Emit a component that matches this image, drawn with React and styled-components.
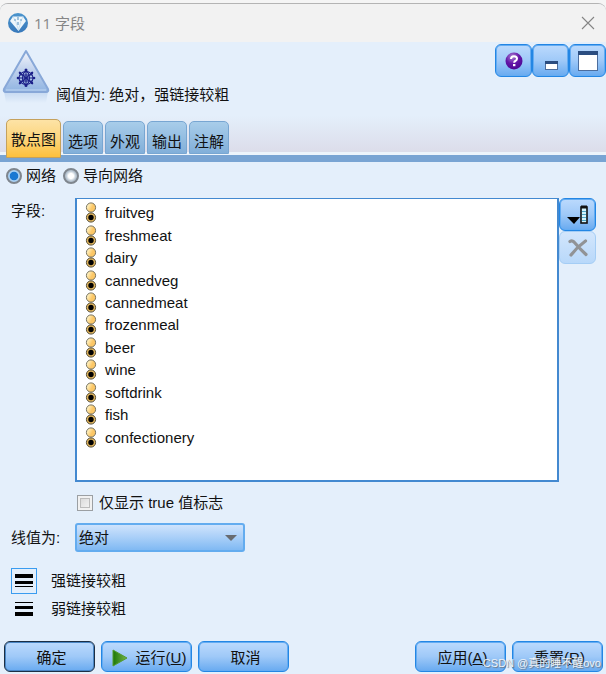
import React, { useState } from 'react'
import styled, { createGlobalStyle } from 'styled-components'

const fields = [
  'fruitveg',
  'freshmeat',
  'dairy',
  'cannedveg',
  'cannedmeat',
  'frozenmeal',
  'beer',
  'wine',
  'softdrink',
  'fish',
  'confectionery'
]

const tabs = ['散点图', '选项', '外观', '输出', '注解']

const LogoIcon = () => (
  <svg width="20" height="20" viewBox="0 0 20 20" aria-hidden="true">
    <defs>
      <linearGradient id="logo" x1="0" y1="0" x2="0" y2="1">
        <stop offset="0" stopColor="#4b95cd" />
        <stop offset="1" stopColor="#3878ba" />
      </linearGradient>
    </defs>
    <circle cx="10" cy="10" r="10" fill="url(#logo)" />
    <path d="M5 3.5L15 3.5L18 8L10.5 18L2 8Z" fill="#eef6fb" />
    <path d="M5 3.5L7.5 8L10.5 17L13 8L15 3.5" fill="none" stroke="#c3dced" strokeWidth="0.8" />
    <path d="M10 4v3M10 9v3M6 7h2M12 7h2" stroke="#6a9fca" strokeWidth="1.2" />
  </svg>
)

const WebGraphIcon = () => (
  <svg width="48" height="56" viewBox="0 0 48 56" aria-hidden="true">
    <defs>
      <linearGradient id="tri" x1="0" y1="0" x2="0" y2="1">
        <stop offset="0" stopColor="#f3f5fb" />
        <stop offset="0.5" stopColor="#bccfec" />
        <stop offset="1" stopColor="#8fb4e2" />
      </linearGradient>
      <linearGradient id="shine" x1="0" y1="0" x2="0" y2="1">
        <stop offset="0" stopColor="#c3d7f0" />
        <stop offset="1" stopColor="#e4effb" />
      </linearGradient>
    </defs>
    <path d="M2 44h44l-2 12h-40z" fill="url(#shine)" />
    <path d="M24 4L46 42Q47 45 44 45H4Q1 45 2 42Z" fill="url(#tri)" stroke="#88a8d8" strokeWidth="2" strokeLinejoin="round" />
    <path d="M4 43h40" stroke="#c0d6f2" strokeWidth="1" />
    <g fill="none" stroke="#1b2089" strokeWidth="1.1">
      <ellipse cx="24" cy="31" rx="7" ry="6.5" />
      <ellipse cx="24" cy="31" rx="3.5" ry="6.5" />
      <path d="M24 22v17M15 31h18M17 25l14 12M31 25l-14 12M18 28h12M18 34h12" />
    </g>
    <g fill="#1b2089">
      <circle cx="24" cy="23" r="1.5" />
      <circle cx="24" cy="38.5" r="1.5" />
      <circle cx="16" cy="31" r="1.3" />
      <circle cx="32" cy="31" r="1.3" />
      <circle cx="18" cy="26" r="1.2" />
      <circle cx="30" cy="26" r="1.2" />
      <circle cx="18" cy="36" r="1.2" />
      <circle cx="30" cy="36" r="1.2" />
    </g>
  </svg>
)

const CloseIcon = () => (
  <svg width="14" height="14" viewBox="0 0 14 14" aria-hidden="true">
    <path d="M1 1L13 13M13 1L1 13" stroke="#858585" strokeWidth="1.1" />
  </svg>
)

const HelpIcon = () => (
  <svg width="18" height="18" viewBox="0 0 18 18" aria-hidden="true">
    <defs>
      <radialGradient id="help" cx="0.4" cy="0.25" r="0.8">
        <stop offset="0" stopColor="#a981d3" />
        <stop offset="0.5" stopColor="#6416a8" />
        <stop offset="1" stopColor="#4a0592" />
      </radialGradient>
    </defs>
    <circle cx="9" cy="9" r="8.5" fill="url(#help)" />
    <path d="M6 7Q6 4.200 9 4.200Q12 4.200 12 6.800Q12 8.200 10.300 9Q9.200 9.600 9.200 10.700" fill="none" stroke="#fff" strokeWidth="2" />
    <rect x="8" y="12" width="2.4" height="2.2" fill="#fff" />
  </svg>
)

const MinimizeIcon = () => (
  <svg width="22" height="22" viewBox="0 0 22 22" aria-hidden="true">
    <rect x="5.5" y="11.5" width="12" height="8" fill="#fff" stroke="#4c6d9d" />
    <path d="M5 11h13v3h-13z" fill="#2b4d80" />
  </svg>
)

const MaximizeIcon = () => (
  <svg width="22" height="22" viewBox="0 0 22 22" aria-hidden="true">
    <rect x="1.5" y="1.5" width="19" height="19" fill="#fff" stroke="#4c6d9d" />
    <path d="M1 1h20v4h-20z" fill="#2b4d80" />
  </svg>
)

const FlagIcon = () => (
  <svg width="12" height="22" viewBox="0 0 12 22" aria-hidden="true">
    <defs>
      <linearGradient id="flag" x1="0" y1="0" x2="1" y2="0.5">
        <stop offset="0.2" stopColor="#fff3c4" />
        <stop offset="0.7" stopColor="#fcc766" />
      </linearGradient>
    </defs>
    <circle cx="6" cy="5.5" r="4.6" fill="url(#flag)" stroke="#77725f" />
    <circle cx="6" cy="15.5" r="4.6" fill="#e3b65b" stroke="#57503b" />
    <circle cx="6" cy="15.5" r="2.7" fill="#000" />
  </svg>
)

const PickFieldIcon = () => (
  <svg width="22" height="20" viewBox="0 0 22 20" aria-hidden="true">
    <path d="M0 12h13l-6 7z" fill="#000" />
    <rect x="14" y="2" width="6" height="16" fill="#d3f4fc" stroke="#111" strokeWidth="1.6" />
    <path d="M14 2h6" stroke="#111" strokeWidth="3" />
    <path d="M15 6.5h4M15 9.5h4M15 12.5h4M15 15.5h4" stroke="#4fa6c8" />
  </svg>
)

const RemoveIcon = () => (
  <svg width="20" height="18" viewBox="0 0 20 18" aria-hidden="true">
    <path d="M2 2.500Q4 1 6 3Q12 10 18 15.500M17.500 2Q9 8 3 16" fill="none" stroke="#919396" strokeWidth="3.2" strokeLinecap="round" />
  </svg>
)

const LinesIcon = ({ flip }) => (
  <svg width="18" height="14" viewBox="0 0 18 14" aria-hidden="true">
    {flip
      ? <path d="M0 0h18v1H0zM0 4h18v3H0zM0 10h18v4H0z" fill="#000" />
      : <path d="M0 0h18v4H0zM0 7h18v3H0zM0 12h18v1H0z" fill="#000" />}
  </svg>
)

const RunIcon = () => (
  <svg width="18" height="20" viewBox="0 0 18 20" aria-hidden="true">
    <defs>
      <linearGradient id="run" x1="0" y1="0" x2="1" y2="0">
        <stop offset="0" stopColor="#1c7806" />
        <stop offset="1" stopColor="#76b34a" />
      </linearGradient>
    </defs>
    <path d="M2 2L16 10L2 18Z" fill="url(#run)" stroke="#529b30" strokeLinejoin="round" />
  </svg>
)

const CaretIcon = () => (
  <svg width="12" height="8" viewBox="0 0 12 8" aria-hidden="true">
    <path d="M0 1h12l-6 6z" fill="#686b70" />
  </svg>
)

export default function App() {
  const [activeTab, setActiveTab] = useState(tabs[0])
  const [graph, setGraph] = useState('web')
  const [onlyTrue, setOnlyTrue] = useState(false)
  const [lineValue, setLineValue] = useState('absolute')
  const [weight, setWeight] = useState('strong')

  return (
    <Page>
      <GlobalStyle />
      <Dialog>
        <TitleBar>
          <LogoIcon />
          <Title>11 字段</Title>
          <CloseButton type="button" aria-label="关闭"><CloseIcon /></CloseButton>
        </TitleBar>

        <Header>
          <WebGraphIcon />
          <Summary>阈值为: 绝对，强链接较粗</Summary>
          <Toolbar>
            <ToolButton type="button" aria-label="帮助"><HelpIcon /></ToolButton>
            <ToolButton type="button" aria-label="最小化"><MinimizeIcon /></ToolButton>
            <ToolButton type="button" aria-label="最大化"><MaximizeIcon /></ToolButton>
          </Toolbar>
        </Header>

        <TabStrip role="tablist">
          {tabs.map((tab) => (
            <Tab
              key={tab}
              type="button"
              role="tab"
              aria-selected={tab === activeTab}
              $active={tab === activeTab}
              onClick={() => setActiveTab(tab)}>
              {tab}
            </Tab>
          ))}
        </TabStrip>

        <Panel>
          <RadioRow>
            <RadioLabel>
              <Radio name="graph" checked={graph === 'web'} onChange={() => setGraph('web')} />
              网络
            </RadioLabel>
            <RadioLabel>
              <Radio name="graph" checked={graph === 'directed'} onChange={() => setGraph('directed')} />
              导向网络
            </RadioLabel>
          </RadioRow>

          <Form>
            <FieldLabel id="fields-label">字段:</FieldLabel>
            <FieldArea>
              <FieldList aria-labelledby="fields-label">
                {fields.map((field) => (
                  <FieldItem key={field}>
                    <FlagIcon />
                    {field}
                  </FieldItem>
                ))}
              </FieldList>
              <SideButtons>
                <ToolButton type="button" aria-label="选择字段"><PickFieldIcon /></ToolButton>
                <ToolButton type="button" aria-label="删除字段" disabled><RemoveIcon /></ToolButton>
              </SideButtons>
            </FieldArea>

            <CheckLabel>
              <Checkbox checked={onlyTrue} onChange={(e) => setOnlyTrue(e.target.checked)} />
              仅显示 true 值标志
            </CheckLabel>

            <SelectLabel htmlFor="line-value">线值为:</SelectLabel>
            <SelectWrap>
              <Select id="line-value" value={lineValue} onChange={(e) => setLineValue(e.target.value)}>
                <option value="absolute">绝对</option>
                <option value="overall">总体百分比</option>
              </Select>
              <CaretIcon />
            </SelectWrap>
          </Form>

          <WeightGroup>
            <WeightLabel>
              <HiddenRadio name="weight" checked={weight === 'strong'} onChange={() => setWeight('strong')} />
              <WeightBox><LinesIcon /></WeightBox>
              强链接较粗
            </WeightLabel>
            <WeightLabel>
              <HiddenRadio name="weight" checked={weight === 'weak'} onChange={() => setWeight('weak')} />
              <WeightBox><LinesIcon flip /></WeightBox>
              弱链接较粗
            </WeightLabel>
          </WeightGroup>
        </Panel>

        <Footer>
          <FooterButton type="button" $primary>确定</FooterButton>
          <FooterButton type="button"><RunIcon /><span>运行(<u>U</u>)</span></FooterButton>
          <FooterButton type="button">取消</FooterButton>
          <Spacer />
          <FooterButton type="button"><span>应用(<u>A</u>)</span></FooterButton>
          <FooterButton type="button"><span>重置(<u>R</u>)</span></FooterButton>
          <Watermark>CSDN @真的睡不醒ovo</Watermark>
        </Footer>
      </Dialog>
    </Page>
  )
}

const GlobalStyle = createGlobalStyle`
* {
  box-sizing: border-box;
}

body {
  margin: 0;
  background: #e4effb;
  color: #111;
  font-family: "Liberation Sans", "Noto Sans CJK SC", sans-serif;
  font-size: 15px;
  line-height: 22px;
}

button, select, input {
  font: inherit;
  color: inherit;
  margin: 0;
}

svg {
  display: block;
  flex: none;
}
`

const Page = styled.div`
padding-top: 3px;
background: #f5f5f5;
`

const Dialog = styled.main`
display: flex;
flex-direction: column;
min-height: calc(100vh - 3px);
background: #e4effb;
border-top: 1px solid #b4b4b4;
border-radius: 8px 8px 0 0;
overflow: hidden;
`

const TitleBar = styled.header`
display: flex;
align-items: center;
gap: 6px;
height: 38px;
padding: 0 11px 0 8px;
background: #f2f2f2;
`

const Title = styled.h1`
flex: 1;
margin: 0;
color: #868686;
font-family: "Open Sans", "Noto Sans CJK SC", sans-serif;
font-size: 15px;
font-weight: 400;
`

const CloseButton = styled.button`
padding: 0;
border: 0;
background: none;
`

const Header = styled.section`
display: flex;
padding: 2px 0 0 2px;
height: 73px;

> svg {
  margin-top: 3px;
}
`

const Summary = styled.p`
flex: 1;
align-self: flex-end;
margin: 0;
padding: 0 0 9px 6px;
`

const Toolbar = styled.div`
display: flex;
`

const ToolButton = styled.button`
display: grid;
place-items: center;
width: 37px;
height: 33px;
padding: 0;
border: 1px solid #2386e4;
border-radius: 6px;
background: linear-gradient(#bcdafd, #9fc9f8 50%, #68aaf0);
box-shadow: inset 0 0 0 1px #64acf2;

&:disabled {
  border-color: #a4cdf5;
  background: linear-gradient(#d3e6fc, #b8d8fa);
  box-shadow: none;
}
`

const TabStrip = styled.div`
display: flex;
align-items: flex-start;
gap: 2px;
height: 47px;
padding: 0 6px;
background: linear-gradient(#e4effb, #dcddea 37px, #edf4fb 37px, #edf4fb 40px, #79a4d3 40px);
`

const Tab = styled.button`
height: ${(props) => (props.$active ? '39px' : '33px')};
margin-top: ${(props) => (props.$active ? '4px' : '6px')};
padding: ${(props) => (props.$active ? '2px 4px 0' : '8px 4px 0')};
border: 1px solid ${(props) => (props.$active ? '#c5a15c' : '#78a6d2')};
border-radius: 5px 5px 0 0;
background: ${(props) => (props.$active ? 'linear-gradient(#fde3a6, #fcd57d 50%, #fdc03c)' : 'linear-gradient(#a8cdea, #82afd9)')};
`

const Panel = styled.section`
flex: 1;
padding: 0 9px 0 11px;
`

const RadioRow = styled.div`
display: flex;
gap: 7px;
margin-left: -5px;
padding: 3px 0 11px;
`

const RadioLabel = styled.label`
display: flex;
align-items: center;
gap: 4px;
`

const Radio = styled.input.attrs({ type: 'radio' })`
appearance: none;
width: 16px;
height: 16px;
border: 2px solid #7f868e;
border-radius: 50%;
background: radial-gradient(#fff 30%, #b5c3d0 60%);

&:checked {
  background: radial-gradient(#1a78d2 45%, #a8cff2 55%);
}
`

const Form = styled.div`
display: grid;
grid-template-columns: 64px 1fr;
`

const FieldLabel = styled.span`
padding-top: 2px;
`

const FieldArea = styled.div`
display: flex;
`

const FieldList = styled.ul`
flex: 1;
display: grid;
grid-auto-rows: 1fr;
min-height: 284px;
margin: 0;
padding: 3px 8px 31px;
border: 2px solid #4389d0;
border-width: 1px 2px 2px;
background: #fff;
list-style: none;
`

const FieldItem = styled.li`
display: flex;
align-items: center;
gap: 8px;
`

const SideButtons = styled.div`
display: flex;
flex-direction: column;
margin-right: 1px;
`

const CheckLabel = styled.label`
grid-column: 2;
display: flex;
align-items: center;
gap: 6px;
padding: 10px 0 9px 2px;
`

const Checkbox = styled.input.attrs({ type: 'checkbox' })`
appearance: none;
width: 16px;
height: 16px;
border: 1px solid #9b9fa3;
background: linear-gradient(135deg, #d3d3d3, #fafafa);
box-shadow: inset 0 0 0 2px #f1f1f1, inset 0 0 0 3px #bcbcbc;

&:checked {
  background: #1a78d2;
}
`

const SelectLabel = styled.label`
align-self: center;
`

const SelectWrap = styled.div`
display: grid;
grid-template-columns: 1fr 20px;
align-items: center;
width: 170px;

> svg {
  grid-area: 1 / 2;
  pointer-events: none;
}
`

const Select = styled.select`
grid-area: 1 / 1 / 2 / 3;
appearance: none;
height: 29px;
padding: 0 24px 0 2px;
border: 2px solid #63acef;
border-radius: 3px;
background: linear-gradient(#cfe3fc, #a9cff8 50%, #80b9f3);
`

const WeightGroup = styled.div`
display: flex;
flex-direction: column;
gap: 2px;
padding: 16px 0;
`

const WeightLabel = styled.label`
display: flex;
align-items: center;
gap: 14px;
`

const HiddenRadio = styled.input.attrs({ type: 'radio' })`
position: absolute;
opacity: 0;
`

const WeightBox = styled.span`
display: grid;
place-items: center;
width: 26px;
height: 26px;
border: 1px solid transparent;

${HiddenRadio}:checked + & {
  border-color: #3a9cf0;
}
`

const Footer = styled.footer`
display: flex;
gap: 6px;
position: relative;
padding: 0 3px 2px 4px;
`

const FooterButton = styled.button`
display: flex;
align-items: center;
justify-content: center;
gap: 7px;
width: 91px;
height: 31px;
padding: 2px 0 0 4px;
border: 1px solid ${(props) => (props.$primary ? '#1c2f45' : '#2386e4')};
border-radius: 6px;
background: linear-gradient(#bcdafd, #9fc9f8 50%, #68aaf0);
box-shadow: inset 0 0 0 1px ${(props) => (props.$primary ? '#4a86c4' : '#64acf2')};
`

const Spacer = styled.div`
flex: 1;
`

const Watermark = styled.span`
position: absolute;
right: 5px;
bottom: 2px;
color: #eef3f8;
font-size: 11px;
line-height: 18px;
text-shadow: 1px 1px 1px #6c7782;
pointer-events: none;
`
